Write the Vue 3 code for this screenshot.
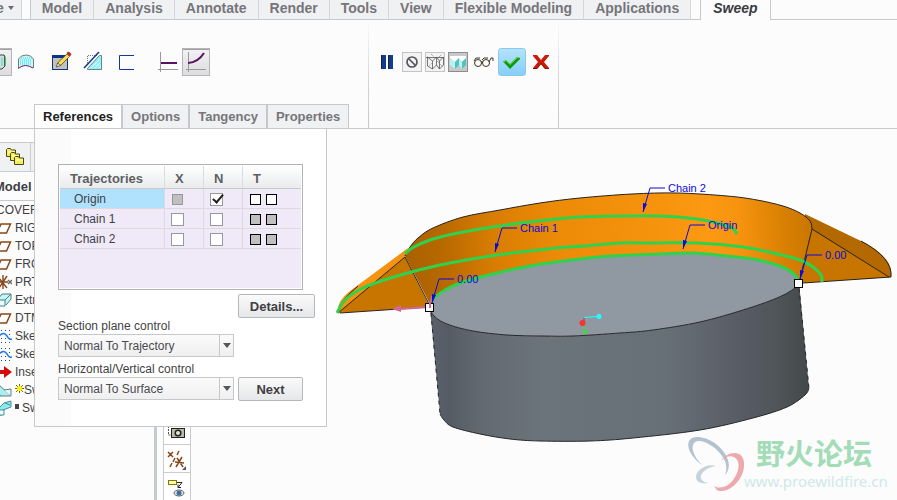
<template>
  <div class="app">
    <nav class="menu">
      <button type="button" class="menu-tab menu-file">e
        <svg width="6" height="4" viewBox="0 0 6 4"><path d="M0 0h6L3 4z" fill="#6b6b70" /></svg>
      </button>
      <div class="menu-group">
        <button v-for="name in menus" :key="name" type="button" class="menu-tab">{{ name }}</button>
      </div>
      <button type="button" class="menu-tab is-active">Sweep</button>
    </nav>

    <header class="ribbon">
      <div class="ribbon-left">
        <div class="tool-row">
          <div class="tool-group is-first">
            <button type="button" class="tool is-pressed" aria-label="Solid">
              <svg width="28" height="28" viewBox="0 0 28 28">
                <path d="M12 8h8v12h-8z" fill="#c8c8c8" />
                <path d="M16 7h4l1 2v9l-3 3h-2" fill="#d8d8d8" stroke="#444" />
                <path d="M17 10h2v8h-2z" fill="#7fe0d8" />
                <path d="M20.500 7v11" stroke="#0a8a2f" />
              </svg>
            </button>
            <button type="button" class="tool" aria-label="Surface">
              <svg width="28" height="28" viewBox="0 0 28 28">
                <path d="M7 10l3-2q4-2 9 0l2 2v10q-7-5-12-1l-3 2z" fill="#c9f8fb" />
                <path d="M9 10h11M8 12h12M8 14h12M8 16h12" stroke="#25dfe8" stroke-dasharray="1 1" />
                <path d="M6.500 21v-10l3-3q5-2 9 0l3 3v9" fill="none" stroke="#777" />
                <path d="M7 20q6-5 14 0" fill="none" stroke="#641c6c" />
              </svg>
            </button>
          </div>
          <div class="tool-group">
            <button type="button" class="tool" aria-label="Sketch">
              <svg width="28" height="28" viewBox="0 0 28 28">
                <rect x="5.500" y="7.500" width="15" height="14" fill="#c5c2b2" stroke="#0a348f" />
                <path d="M5 8.500h16" stroke="#0a348f" stroke-width="3" />
                <path d="M10 18l1.500-4L20 6l2.500 2.500L14 17z" fill="#f7dd55" stroke="#574022" stroke-width=".8" />
                <path d="M19.500 5l2-1.500 3 2.500-1.500 2.500z" fill="#b5231c" />
                <path d="M9.500 19l1-4 3 2.500z" fill="#fff" stroke="#333" stroke-width=".7" />
              </svg>
            </button>
            <button type="button" class="tool" aria-label="Thin feature">
              <svg width="28" height="28" viewBox="0 0 28 28">
                <path d="M8.500 20.500L20.500 7.500h2v14h-14z" fill="#8ff4f8" stroke="#6f8285" />
                <path d="M12 20l8-8M16 20l5-5M20 20l2-2" stroke="#e9ffff" />
                <path d="M8.500 15V7.500H18" fill="none" stroke="#777" stroke-dasharray="1 1" />
                <path d="M5 20L20 4" stroke="#0a348f" stroke-width="1.500" />
              </svg>
            </button>
            <button type="button" class="tool" aria-label="Open ends">
              <svg width="28" height="28" viewBox="0 0 28 28">
                <path d="M23 7.500H8.500v14H23" fill="none" stroke="#123b93" />
              </svg>
            </button>
          </div>
          <div class="tool-group is-last">
            <button type="button" class="tool" aria-label="Constant section">
              <svg width="28" height="28" viewBox="0 0 28 28">
                <path d="M6.500 4v20M4 21.500h20" stroke="#999" />
                <path d="M7 15h16" stroke="#5c1263" stroke-width="2" />
              </svg>
            </button>
            <button type="button" class="tool is-pressed" aria-label="Variable section">
              <svg width="28" height="28" viewBox="0 0 28 28">
                <path d="M6.500 4v20M4 21.500h20" stroke="#999" />
                <path d="M6 15q10-.5 16-10" fill="none" stroke="#5c1263" stroke-width="2" />
              </svg>
            </button>
          </div>
        </div>
        <div class="dash-tabs">
          <button
            v-for="tab in dashTabs"
            :key="tab"
            type="button"
            :class="['dash-tab', { 'is-active': tab === activeTab }]"
            @click="activeTab = tab"
          >{{ tab }}</button>
        </div>
      </div>

      <div class="ribbon-actions">
        <button type="button" class="action" aria-label="Pause">
          <svg width="24" height="24" viewBox="0 0 24 24">
            <path d="M6 5h5v14H6zM13 5h5v14h-5z" fill="#123b93" />
            <path d="M6 5h1v14H6zM13 5h1v14h-1z" fill="#222" />
          </svg>
        </button>
        <button type="button" class="action is-small" aria-label="No preview">
          <svg width="18" height="18" viewBox="0 0 18 18">
            <circle cx="9" cy="9" r="5" fill="none" stroke="#55555c" stroke-width="1.700" />
            <path d="M5.500 5.500l7 7" stroke="#55555c" stroke-width="1.700" />
          </svg>
        </button>
        <button type="button" class="action is-small" aria-label="Unattached">
          <svg width="18" height="18" viewBox="0 0 18 18">
            <path d="M0 4.500h18M1.500 4v9l5 3V8l-5-4M6.500 8l4-4v8l-4 4M10.500 4l3 4v8l-3-4M13.500 8l4-4v8l-4 4" fill="none" stroke="#555" stroke-width=".8" />
            <path d="M2 14l4-4M11 8l6 6M5 1l3 3M13 4l3-3" stroke="#888" stroke-dasharray="1 1" />
          </svg>
        </button>
        <button type="button" class="action is-small is-on" aria-label="Attached">
          <svg width="18" height="18" viewBox="0 0 18 18">
            <path d="M1 3h16v2l-4 4-3-4-4 4-5-4z" fill="#fff" />
            <path d="M1 5l5 4v7l-5-4z" fill="#b9f3ee" />
            <path d="M6 9l4-4v7l-4 4z" fill="#4fc3bd" />
            <path d="M10 5l3 4v7l-3-4z" fill="#b9f3ee" />
            <path d="M13 9l4-4v7l-4 4z" fill="#4fc3bd" />
          </svg>
        </button>
        <button type="button" class="action" aria-label="Verify">
          <svg width="24" height="24" viewBox="0 0 24 24" fill="none" stroke="#3b3223">
            <circle cx="7" cy="13" r="3.500" />
            <circle cx="15" cy="13" r="3.500" />
            <path d="M10 12h2M3 11l2-3h4M11 10l2-2h4M18 12l2-4h2v3" />
          </svg>
        </button>
        <button type="button" class="action is-ok" aria-label="OK">
          <svg width="26" height="26" viewBox="0 0 26 26">
            <path d="M4 12.500l3-1.500 4 4 7-7h3v2L11 20z" fill="#0b9a10" />
            <path d="M5 12.500l2-1 4 4 7.500-7H21" fill="none" stroke="#7fe33a" />
          </svg>
        </button>
        <button type="button" class="action" aria-label="Cancel">
          <svg width="24" height="24" viewBox="0 0 24 24">
            <path d="M4 5h4l4 5 4-5h4v1l-5 6 5 6v1h-4l-4-5-4 5H4v-1l5-6-5-6z" fill="#c81c06" />
            <path d="M4 18.500h4l4-5 4 5h4" fill="none" stroke="#8a1205" />
          </svg>
        </button>
      </div>
    </header>

    <main class="workspace">
      <aside class="tree">
        <div class="tree-tools">
          <button type="button" class="tree-tool" aria-label="Folders">
            <svg width="20" height="20" viewBox="0 0 20 20">
              <g v-for="n in 3" :key="n" :transform="`translate(${n * 4 - 4} ${n * 4 - 4})`">
                <path d="M1.500 9.500v-7l1-1h3l1 1.500h4v6.500z" fill="#f4ef58" stroke="#4a4617" />
                <path d="M3 5h7" stroke="#fffde0" />
              </g>
            </svg>
          </button>
          <span class="tree-tool"></span>
        </div>
        <h2 class="tree-title">Model</h2>
        <ul class="tree-list">
          <li v-for="(node, i) in nodes" :key="i" class="tree-node">
            <svg v-if="node.icon" class="tree-icon" width="16" height="16" viewBox="0 0 16 16">
              <path v-if="node.icon === 'plane'" d="M5 4h9.500l-4 9H1z" fill="#fff" stroke="#8a4516" stroke-width="1.500" />
              <g v-else-if="node.icon === 'csys'" fill="none" stroke="#8a4516" stroke-width="1.400">
                <path d="M2 3l9 11M11 2L3 14M7 1v14M2 8h10" />
                <path d="M12 6l4 4M16 6l-4 4" stroke="#666" />
              </g>
              <g v-else-if="node.icon === 'extrude'" stroke="#4a7c80">
                <path d="M1 8l5-6h9v5l-5 6" fill="#c5f5f6" />
                <path d="M3 8h6v6H3z" fill="#e8feff" />
                <path d="M9 8l6-6" />
              </g>
              <g v-else-if="node.icon === 'sketch'" fill="none">
                <path d="M1 2.500h15M1 6.500h15M1 10.500h15M1 14.500h15" stroke="#16439a" stroke-dasharray="1 3" />
                <path d="M3 8q5-5 8 0 2 4 5 3" stroke="#1f78e8" stroke-width="1.500" />
              </g>
              <path v-else-if="node.icon === 'insert'" d="M1 6h7V2l8 6-8 6v-4H1z" fill="#d40c0c" />
              <g v-else-if="node.icon === 'sweepNew'" stroke="#607d80">
                <path d="M1 1l14 13H4z" fill="#a9eef0" />
                <path d="M8 8l7-1v7" fill="#e2fbfb" />
              </g>
              <g v-else stroke="#4a8d92">
                <path d="M2 9l6-6 7-2v6l-8 3-1 5H2z" fill="#8eeaf0" />
                <path d="M3 10h5v5H3zM9 3l5 2" fill="#e8feff" />
              </g>
            </svg>
            <svg v-if="node.mark === 'star'" class="tree-mark" width="9" height="9" viewBox="0 0 9 9">
              <path d="M4.500 0v9M0 4.500h9M1 1l7 7M8 1L1 8" stroke="#7c6c00" />
              <circle cx="4.500" cy="4.500" r="2.500" fill="#fff200" />
            </svg>
            <span v-if="node.mark === 'square'" class="tree-square"></span>
            <span>{{ node.text }}</span>
          </li>
        </ul>
      </aside>
      <div class="splitter"></div>
      <div class="side-tools">
        <button type="button" class="side-tool" aria-label="Saved views">
          <svg width="24" height="24" viewBox="0 0 24 24">
            <path d="M4.500 0v15h3M7.500 2v8M11 4h8" fill="none" stroke="#555" stroke-dasharray="2 1" />
            <rect x="7.500" y="8.500" width="13" height="9" fill="#b9b9a6" stroke="#222" />
            <circle cx="14" cy="13" r="3.500" fill="#222" />
            <circle cx="14" cy="13" r="2" fill="#e6e6dc" />
          </svg>
        </button>
        <button type="button" class="side-tool" aria-label="Datum display">
          <svg width="24" height="24" viewBox="0 0 24 24" fill="none" stroke="#8a4516" stroke-width="1.500">
            <path d="M4 4l5 5M9 4L4 9M15 3l-2 4M11 10l-2 4M8 15l-2 4M11 14l9 1M18 9l-6 10M13 10l6 9" />
            <path d="M22 18v4h-4z" fill="#555" stroke="none" />
          </svg>
        </button>
        <button type="button" class="side-tool" aria-label="Annotation display">
          <svg width="24" height="24" viewBox="0 0 24 24">
            <rect x="4.500" y="4.500" width="8" height="4" fill="#ffffa0" stroke="#82780a" />
            <path d="M13 6.500h5l-4 5v-3m0 3h3" fill="none" stroke="#222" />
            <ellipse cx="15" cy="17" rx="5" ry="3" fill="#dfe4e8" stroke="#666" />
            <circle cx="15" cy="17" r="2.500" fill="#3f6f9f" />
          </svg>
        </button>
      </div>

      <svg class="viewport" viewBox="191 129 706 371" preserveAspectRatio="xMinYMin meet">
        <defs>
          <linearGradient id="band" gradientUnits="userSpaceOnUse" x1="405" y1="256" x2="812" y2="230">
            <stop offset="0" stop-color="#a96000" />
            <stop offset=".1" stop-color="#b96a00" />
            <stop offset=".22" stop-color="#d97d02" />
            <stop offset=".38" stop-color="#ec8b06" />
            <stop offset=".75" stop-color="#fc9812" />
            <stop offset=".82" stop-color="#f7940f" />
            <stop offset=".93" stop-color="#d98003" />
            <stop offset="1" stop-color="#c97601" />
          </linearGradient>
          <linearGradient id="body" gradientUnits="userSpaceOnUse" x1="430" y1="0" x2="809" y2="0">
            <stop offset="0" stop-color="#5c626b" />
            <stop offset=".05" stop-color="#565c65" />
            <stop offset=".14" stop-color="#636a71" />
            <stop offset=".3" stop-color="#6c747b" />
            <stop offset=".62" stop-color="#687077" />
            <stop offset=".85" stop-color="#555962" />
            <stop offset=".92" stop-color="#4f5557" />
            <stop offset="1" stop-color="#434949" />
          </linearGradient>
        </defs>

        <!-- sweep surface -->
        <path :d="leftWingTop" fill="#f5920f" />
        <path d="M338 313L405 257 430 307z" fill="#c87500" />
        <path :d="rightWing" fill="#b46800" />
        <path d="M812 229L890 277 799 283z" fill="#c87500" />
        <path :d="band" fill="url(#band)" />
        <g fill="none" stroke="#26221c">
          <path :d="smooth(topEdge)" />
          <path d="M338 313L405 257 429 304" />
          <path d="M340 313L429 307" />
          <path d="M337 312Q341 300 358 286" />
          <path d="M812 229L889 277M812 229L800 279M803 283L891 277" />
          <path d="M861 241Q893 258 891 277" />
        </g>

        <!-- extruded body -->
        <path :d="body" fill="url(#body)" />
        <path :d="face" fill="#9098a1" />
        <g fill="none" stroke="#26262a">
          <path :d="smooth(faceFront)" />
          <path :d="smooth(baseEdge)" />
          <path d="M431 313L440 414M799 288L809 388" stroke-dasharray="4 4" />
        </g>

        <path v-for="(curve, i) in chains" :key="i" :d="smooth(curve)" fill="none" stroke="#2fd24c" stroke-width="3" />

        <g stroke="#d0699a" stroke-width="2">
          <path d="M429 307L400 309M430 307l2-11" />
          <path d="M392 309l9-4v7z" fill="#d0699a" stroke="none" />
        </g>
        <g v-for="(note, i) in notes" :key="`n${i}`">
          <path :d="`M${note.x} ${note.y}l7-24h15`" fill="none" stroke="#0a0adc" />
          <path :d="`M${note.x} ${note.y}l0-9 4 1z`" fill="#0a0adc" />
          <text :x="note.x + 25" :y="note.y - 20" class="note">{{ note.text }}</text>
        </g>
        <g fill="#fff" stroke="#000">
          <rect x="425.500" y="303.500" width="8" height="8" />
          <rect x="794.500" y="279.500" width="8" height="8" />
        </g>
        <path d="M430 308v-6" stroke="#d0699a" stroke-width="2" />
        <path d="M584 317.500l14-1" stroke="#2ff" />
        <circle cx="599" cy="316.500" r="2.500" fill="#2ff" />
        <path d="M584 318v4" stroke="#a33" />
        <path d="M584 325l1 6" stroke="#2ee52e" />
        <circle cx="585" cy="332" r="2" fill="#2ee52e" />
        <circle cx="582.500" cy="323" r="3" fill="#f53434" />

        <!-- forum mark -->
        <g fill-rule="evenodd">
          <path d="M692 438c10-4 30 5 36 22 2 7 0 12-3 15 2-5 2-10-1-16-7-13-23-21-29-17-5 4-2 14 7 23-10-7-19-21-10-27z" fill="#b3c2ce" />
          <path d="M735 453c8 0 11 9 8 19-4 12-15 20-23 19-3 0-4-2-6-5 7 4 16 0 21-9 5-8 5-17-1-20-4-2-9 0-13 4 3-5 8-8 14-8z" fill="#eda9ab" />
          <path d="M716 466c-9-3-20 4-20 11 0 5 5 7 12 6-5-1-8-4-7-7 1-5 8-9 15-10z" fill="#c7d2da" />
        </g>
        <text x="756" y="465" class="mark-name">野火论坛</text>
        <text x="744" y="487" class="mark-url">www.proewildfire.cn</text>
      </svg>

      <section class="panel">
        <div class="grid-box">
          <table class="grid">
            <colgroup>
              <col class="col-name" /><col class="col-flag" /><col class="col-flag" /><col />
            </colgroup>
            <thead>
              <tr>
                <th class="name">Trajectories</th>
                <th>X</th>
                <th>N</th>
                <th>T</th>
              </tr>
            </thead>
            <tbody>
              <tr v-for="row in rows" :key="row.name" :class="{ selected: row.name === 'Origin' }">
                <td class="name">{{ row.name }}</td>
                <td><input v-model="row.x" type="checkbox" class="check" :disabled="row.locked" :aria-label="`${row.name} X`" /></td>
                <td><input v-model="row.n" type="checkbox" class="check" :aria-label="`${row.name} N`" /></td>
                <td>
                  <div class="tangents">
                    <input v-for="side in 2" :key="side" type="checkbox" class="tangent" :disabled="!row.locked" :aria-label="`${row.name} T ${side}`" />
                  </div>
                </td>
              </tr>
            </tbody>
          </table>
        </div>
        <button type="button" class="btn btn-details">Details...</button>
        <label class="field-label" for="plane">Section plane control</label>
        <div class="field-row">
          <div class="drop">
            <select id="plane"><option>Normal To Trajectory</option></select>
            <span class="drop-arrow"></span>
          </div>
        </div>
        <label class="field-label is-second" for="vertical">Horizontal/Vertical control</label>
        <div class="field-row">
          <div class="drop">
            <select id="vertical"><option>Normal To Surface</option></select>
            <span class="drop-arrow"></span>
          </div>
          <button type="button" class="btn btn-next">Next</button>
        </div>
      </section>
    </main>
  </div>
</template>

<script setup>
import { reactive, ref } from 'vue'

const menus = ['Model', 'Analysis', 'Annotate', 'Render', 'Tools', 'View', 'Flexible Modeling', 'Applications']
const dashTabs = ['References', 'Options', 'Tangency', 'Properties']
const activeTab = ref('References')

const rows = reactive([
  { name: 'Origin', x: false, n: true, locked: true },
  { name: 'Chain 1', x: false, n: false, locked: false },
  { name: 'Chain 2', x: false, n: false, locked: false }
])

const nodes = [
  { text: 'COVER' },
  { icon: 'plane', text: 'RIG' },
  { icon: 'plane', text: 'TOP' },
  { icon: 'plane', text: 'FRO' },
  { icon: 'csys', text: 'PRT' },
  { icon: 'extrude', text: 'Extr' },
  { icon: 'plane', text: 'DTM' },
  { icon: 'sketch', text: 'Ske' },
  { icon: 'sketch', text: 'Ske' },
  { icon: 'insert', text: 'Inse' },
  { icon: 'sweepNew', mark: 'star', text: 'Sw' },
  { icon: 'sweep', mark: 'square', text: 'Sw' }
]

const notes = [
  { x: 643, y: 212, text: 'Chain 2' },
  { x: 495, y: 252, text: 'Chain 1' },
  { x: 683, y: 249, text: 'Origin' },
  { x: 432, y: 303, text: '0.00' },
  { x: 800, y: 279, text: '0.00' }
]

const topEdge = [[405, 256], [410, 247], [418, 238], [433, 228], [463, 217], [500, 210], [540, 203], [580, 198], [632, 194], [677, 193], [727, 196], [757, 200], [783, 206], [800, 213], [810, 221], [812, 229]]
const originEdge = [[430, 304], [434, 298], [445, 290], [463, 282], [497, 273], [530, 266], [563, 261], [610, 256], [660, 254], [693, 253], [727, 256], [753, 259], [777, 265], [793, 273], [799, 281]]
const faceFront = [[430, 308], [434, 316], [447, 324], [473, 331], [507, 335], [543, 336], [573, 336], [620, 333], [653, 330], [700, 322], [743, 310], [777, 298], [795, 288], [799, 282]]
const baseEdge = [[440, 414], [444, 420], [453, 427], [480, 434], [510, 439], [540, 441], [590, 441], [633, 438], [700, 430], [753, 418], [787, 407], [805, 395], [809, 388]]
const chain1 = [[337, 313], [345, 300], [363, 288], [397, 276], [440, 265], [497, 255], [547, 249], [583, 246], [620, 243], [653, 243], [697, 243], [743, 247], [777, 254], [800, 260], [813, 267], [821, 275], [822, 282]]
const chain2 = [[405, 254], [412, 248], [430, 240], [453, 234], [480, 229], [513, 224], [547, 220], [580, 217], [620, 216], [660, 216], [697, 219], [717, 223], [732, 228], [737, 234]]
const chains = [chain2, chain1, originEdge]

// Catmull-Rom spline through the points, as cubic beziers
function smooth(points, start = 'M') {
  let d = `${start}${points[0].join(' ')}`
  for (let i = 0; i < points.length - 1; i++) {
    const p0 = points[i - 1] || points[i]
    const p1 = points[i]
    const p2 = points[i + 1]
    const p3 = points[i + 2] || p2
    d += `C${p1[0] + (p2[0] - p0[0]) / 6} ${p1[1] + (p2[1] - p0[1]) / 6}`
    d += ` ${p2[0] - (p3[0] - p1[0]) / 6} ${p2[1] - (p3[1] - p1[1]) / 6} ${p2[0]} ${p2[1]}`
  }
  return d
}

const reversed = (points) => [...points].reverse()

const band = `${smooth(topEdge)}${smooth(reversed(originEdge), 'L')}z`
const face = `${smooth(originEdge)}${smooth(reversed(faceFront), 'L')}z`
const body = `${smooth(faceFront)}${smooth(reversed(baseEdge), 'L')}z`
const leftWingTop = 'M338 313Q336 302 350 291L373 274 408 248 405 257z'
const rightWing = 'M805 214L863 242Q894 258 891 277L799 283z'
</script>

<style>
body {
  margin: 0;
  background: #fcfcfc;
}
</style>

<style scoped>
.app {
  display: flex;
  flex-direction: column;
  min-height: 100vh;
  overflow: hidden;
  background: #fcfcfc;
  color: #3f3f44;
  font-family: "Liberation Sans", Arial, sans-serif;
  font-size: 12px;
}

button {
  font-family: inherit;
  cursor: pointer;
}

svg {
  display: block;
  flex-shrink: 0;
}

/* menu */
.menu {
  display: flex;
  height: 20px;
  box-shadow: inset 0 -1px #c5c9cc;
}

.menu-tab {
  height: 20px;
  padding: 0 11px 3px;
  border: 0;
  border-right: 1px solid #d5d8da;
  border-bottom: 1px solid #c5c9cc;
  background: #eff1f2;
  color: #76757a;
  font-size: 14px;
  font-weight: 700;
  line-height: 16px;
  white-space: nowrap;
}

.menu-group {
  display: flex;
  margin: 0 9px 0 8px;
  border-left: 1px solid #c5c9cc;
}

.menu-file {
  display: flex;
  align-items: center;
  gap: 4px;
  margin-left: -4px;
  padding: 0 7px 3px 0;
}

.menu-tab.is-active {
  padding: 0 12px 4px;
  border: solid #c5c9cc;
  border-width: 0 1px;
  background: #fcfcfc;
  color: #3a3a40;
  font-style: italic;
}

/* ribbon */
.ribbon {
  display: flex;
  border-bottom: 1px solid #c5c9cc;
}

.ribbon-left {
  display: flex;
  flex-direction: column;
  gap: 28px;
  width: 368px;
  padding-top: 28px;
}

.tool-row {
  display: flex;
  gap: 7px;
}

.tool-group {
  display: flex;
  gap: 4px;
}

.tool-group.is-first {
  gap: 0;
  margin-left: -16px;
}

.tool-group.is-last {
  gap: 0;
  margin-left: 8px;
}

.tool {
  width: 28px;
  height: 28px;
  padding: 0;
  border: 0;
  background: none;
}

.tool.is-pressed {
  background: linear-gradient(#f3f3f5, #dcdce0);
  box-shadow: inset 0 0 0 1px #b5b5b8, inset 0 2px #a0a0a3;
}

.dash-tabs {
  display: flex;
  padding-left: 34px;
}

.dash-tab {
  height: 24px;
  padding: 0 8px;
  border: 1px solid #c5c9cc;
  border-bottom: 0;
  background: #eff1f2;
  color: #76757a;
  font-size: 13px;
  font-weight: 700;
}

.dash-tab.is-active {
  background: #fff;
  color: #222;
}

.ribbon-actions {
  display: flex;
  align-items: flex-start;
  gap: 3px;
  padding: 28px 5px 0 6px;
  border: solid;
  border-width: 0 1px;
  border-image: linear-gradient(#fcfcfc, #d5d8da 50%, #c5c9cc) 1;
}

.action {
  display: flex;
  align-items: center;
  justify-content: center;
  width: 24px;
  height: 28px;
  padding: 0;
  border: 0;
  background: none;
}

.action.is-small {
  width: 20px;
  height: 20px;
  margin-top: 4px;
  border: 1px solid #c3c3c6;
  background: #f3f3f4;
}

.action.is-small.is-on {
  border-color: #8d8d90;
  background: #c8c8ca;
}

.action.is-ok {
  width: 28px;
  border: 1px solid #8ac9ee;
  border-radius: 3px;
  background: linear-gradient(#b5e2fb, #86cffa);
}

/* workspace */
.workspace {
  position: relative;
  display: flex;
  flex: 1;
}

.tree {
  width: 154px;
  padding-top: 13px;
  overflow: hidden;
}

.tree-tools {
  display: flex;
}

.tree-tool {
  display: flex;
  box-sizing: border-box;
  align-items: center;
  justify-content: center;
  width: 31px;
  height: 30px;
  padding: 0;
  border: 1px solid #c9cccf;
  border-left-width: 0;
  background: #eff1f2;
}

.tree-title {
  height: 28px;
  margin: 0 0 0 -6px;
  border-bottom: 1px solid #c5c9cc;
  font-size: 13px;
  line-height: 30px;
}

.tree-list {
  margin: 0 0 0 -4px;
  padding: 0;
  list-style: none;
}

.tree-node {
  display: flex;
  align-items: center;
  height: 18px;
}

.tree-icon {
  margin-right: 3px;
}

.tree-mark {
  margin-bottom: 4px;
}

.tree-square {
  width: 4px;
  height: 5px;
  margin: 0 3px 4px 0;
  background: #444;
}

.splitter {
  width: 3px;
  margin-right: 6px;
  background: #c5cacd;
}

.side-tools {
  display: flex;
  flex-direction: column;
  justify-content: flex-end;
  width: 26px;
  border: solid #c9cccf;
  border-width: 0 1px;
}

.side-tool {
  height: 28px;
  padding: 2px 0 0;
  border: 0;
  border-top: 1px solid #c9cccf;
  background: #fff;
}

.viewport {
  flex: 1;
  min-width: 0;
}

.note {
  fill: #0a0adc;
  font-size: 11px;
}

.mark-name {
  fill: #a4dcb8;
  font-family: "Noto Sans CJK SC", sans-serif;
  font-size: 29px;
  font-weight: 700;
}

.mark-url {
  fill: #cfe9e6;
  font-family: "Noto Sans", sans-serif;
  font-size: 15px;
}

/* references panel */
.panel {
  position: absolute;
  top: 0;
  left: 34px;
  display: flex;
  flex-direction: column;
  align-items: flex-start;
  padding: 35px 11px 25px 23px;
  border: 1px solid #c5c9cc;
  border-top: 0;
  background: linear-gradient(to right, #fbfbfb 36px, #fff 36px);
}

.grid-box {
  width: 241px;
  height: 122px;
  padding: 1px;
  border: 1px solid #b0b2b4;
  background: #f0eaf8 content-box;
}

.grid {
  width: 100%;
  border-collapse: separate;
  border-spacing: 0;
  table-layout: fixed;
}

.col-name {
  width: 105px;
}

.col-flag {
  width: 39px;
}

.grid th {
  height: 20px;
  padding: 2px 0 0 10px;
  border-right: 1px solid #dcdcde;
  border-bottom: 1px solid #c9c9cc;
  background: linear-gradient(#fff, #e9ebec);
  color: #5f5f63;
  font-size: 13px;
  text-align: left;
}

.grid td {
  height: 18px;
  padding: 1px 0 0 6px;
  border-right: 1px solid #dcdae0;
  border-bottom: 1px solid #dcdae0;
}

.grid th:last-child,
.grid td:last-child {
  border-right: 0;
}

.grid td.name {
  padding-left: 14px;
}

.grid .selected .name {
  background: #b0e2fe;
}

.check,
.tangent {
  display: block;
  box-sizing: border-box;
  width: 13px;
  height: 13px;
  margin: 0;
  border: 1px solid #97979c;
  background: #fff;
  appearance: none;
}

.check:disabled {
  width: 11px;
  height: 11px;
  margin: 0 1px;
  background: #c0c0c0;
}

.check:checked::after {
  content: "";
  display: block;
  width: 4px;
  height: 9px;
  margin: -2px 0 0 4px;
  border: solid #222;
  border-width: 0 2px 2px 0;
  transform: rotate(40deg);
}

.tangents {
  display: flex;
  gap: 5px;
  padding-left: 1px;
}

.tangent {
  width: 11px;
  height: 11px;
  border-color: #000;
}

.tangent:disabled {
  background: #c0c0c0;
}

.btn {
  height: 24px;
  padding: 0;
  border: 1px solid #b5b8ba;
  border-radius: 2px;
  background: linear-gradient(#fafafa, #e6e7e9);
  color: #3f3f44;
  font-size: 13px;
  font-weight: 700;
}

.btn-details {
  width: 77px;
  margin: 4px 0 0 180px;
}

.field-label {
  margin-top: 1px;
  line-height: 15px;
}

.field-label.is-second {
  margin-top: 5px;
}

.field-row {
  display: flex;
  gap: 4px;
}

.drop {
  position: relative;
  width: 176px;
}

.drop select {
  width: 100%;
  height: 23px;
  padding: 0 20px 0 5px;
  border: 1px solid #c5c9cc;
  border-radius: 0;
  background: linear-gradient(#fbfbfb, #efeff0);
  color: #4a4a50;
  font-family: inherit;
  font-size: 12px;
  appearance: none;
}

.drop-arrow {
  position: absolute;
  top: 1px;
  right: 1px;
  display: flex;
  align-items: center;
  justify-content: center;
  width: 13px;
  height: 21px;
  border-left: 1px solid #c5c9cc;
  pointer-events: none;
}

.drop-arrow::after {
  content: "";
  border: 4px solid transparent;
  border-top: 5px solid #55565c;
  border-bottom: 0;
}

.btn-next {
  width: 65px;
}
</style>
